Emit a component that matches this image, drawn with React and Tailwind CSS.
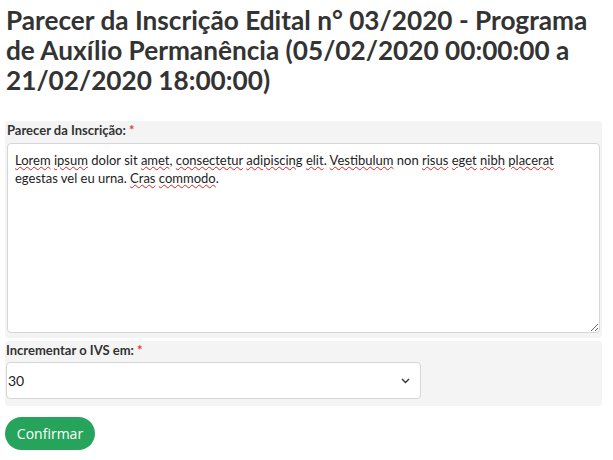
import React from 'react';

const W = ({ children }) => (
  <span className="underline decoration-wavy decoration-[#e02020] decoration-1 underline-offset-[1px]">{children}</span>
);

export default function App() {
  return (
    <div className="bg-white min-h-[460px] px-[5px] text-[#333]" style={{ fontFamily: 'Lato, "Liberation Sans", sans-serif' }}>
      <h1 className="pt-[5px] pl-[1px] text-[26.2px] leading-[30px] font-bold text-[#333]">
        Parecer da Inscrição Edital n° 03/2020 - Programa de Auxílio Permanência (05/02/2020 00:00:00 a 21/02/2020 18:00:00)
      </h1>

      <div className="mt-[26px] bg-[#f4f4f4] rounded-[4px] w-[597px] px-[2px] pb-[5px]">
        <label className="block text-[13px] font-bold leading-[18px] text-[#333]">
          Parecer da Inscrição: <span className="text-[#e0403a]">*</span>
        </label>
        <div className="mt-[4px] h-[190px] bg-white border border-[#d6d6d6] rounded-[4px] px-[7px] py-[7px] text-[13px] leading-[18px] text-[#222] resize-y overflow-auto">
          <W>Lorem</W> <W>ipsum</W> dolor sit <W>amet</W>, <W>consectetur</W> <W>adipiscing</W> <W>elit</W>. <W>Vestibulum</W> non <W>risus</W> <W>eget</W> <W>nibh</W> <W>placerat</W> egestas vel eu urna. <W>Cras</W> <W>commodo</W>.
        </div>
      </div>

      <div className="mt-[3px] bg-[#f4f4f4] rounded-[4px] w-[597px] px-[1px] pb-[7px]">
        <label className="block text-[13px] font-bold leading-[18px] text-[#333]">
          Incrementar o IVS em: <span className="text-[#e0403a]">*</span>
        </label>
        <div className="mt-[3px] w-[415px] h-[37px] bg-white border border-[#d6d6d6] rounded-[4px] flex items-center justify-between pl-[1px] pr-[10px]">
          <span className="text-[14px] text-[#222]">30</span>
          <svg width="9" height="6" viewBox="0 0 9 6" fill="none" stroke="#333" strokeWidth="1.4">
            <path d="M1 1l3.5 3.5L8 1" />
          </svg>
        </div>
      </div>

      <button className="mt-[11px] w-[90px] h-[33px] rounded-full bg-[#27a45c] text-white text-[14px]" style={{ fontFamily: '"Open Sans", sans-serif' }}>
        Confirmar
      </button>
    </div>
  );
}
